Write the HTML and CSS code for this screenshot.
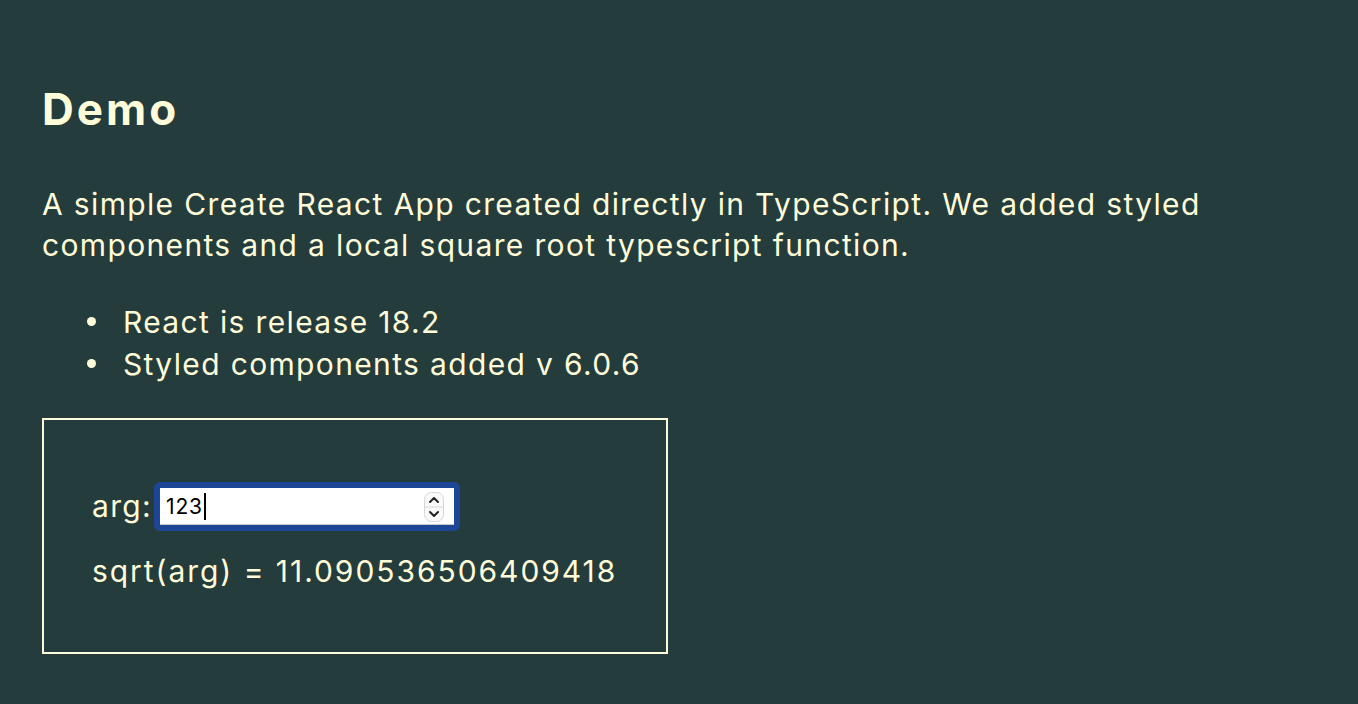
FILE: index.html
```html
<!DOCTYPE html>
<html lang="en">
<head>
<meta charset="utf-8">
<title>Demo</title>
<link rel="stylesheet" href="styles.css">
</head>
<body>
<main class="page">
  <h1 class="title">Demo</h1>
  <p class="intro">A simple Create React App created directly in TypeScript. We added styled components and a local square root typescript function.</p>
  <ul class="notes">
    <li class="note">React is release 18.2</li>
    <li class="note">Styled components added v 6.0.6</li>
  </ul>
  <section class="calc">
    <div class="arg-row">
      <label class="arg-label" for="arg">arg:</label>
      <div class="field" id="arg">
        <span class="field-value">123</span><span class="caret"></span>
        <span class="spinner">
          <svg width="20" height="30" viewBox="0 0 20 30">
            <rect x="0.5" y="0.5" width="19" height="29" rx="7" fill="#fafafa" stroke="#d6d6d6"/>
            <line x1="1" y1="15" x2="19" y2="15" stroke="#d6d6d6"/>
            <path d="M6 10 L10 6 L14 10" fill="none" stroke="#222" stroke-width="2" stroke-linecap="round" stroke-linejoin="round"/>
            <path d="M6 20 L10 24 L14 20" fill="none" stroke="#222" stroke-width="2" stroke-linecap="round" stroke-linejoin="round"/>
          </svg>
        </span>
      </div>
    </div>
    <div class="result">sqrt(arg) = 11.090536506409418</div>
  </section>
</main>
</body>
</html>
```
FILE: styles.css
```css
html, body {
  margin: 0;
  padding: 0;
  background: #253c3d;
  color: #fffcd9;
  font-family: Inter, "Noto Sans", "Liberation Sans", sans-serif;
}
.page {
  padding: 82px 42px 0 42px;
}
.title {
  margin: 0;
  font-size: 44px;
  line-height: 54px;
  font-weight: 700;
  letter-spacing: 3px;
}
.intro {
  margin: 48px 0 0 0;
  font-size: 30px;
  line-height: 41px;
  letter-spacing: 1.35px;
}
.notes {
  margin: 35px 0 0 0;
  padding: 0 0 0 45px;
  list-style: none;
  font-size: 30px;
  line-height: 42px;
  letter-spacing: 1.35px;
}
.note {
  display: flex;
  align-items: center;
}
.note::before {
  content: "";
  width: 9px;
  height: 9px;
  border-radius: 50%;
  background: #fffcd9;
  margin-right: 27px;
  flex: none;
  position: relative;
  top: -1px;
}
.calc {
  margin-top: 33px;
  width: 626px;
  box-sizing: border-box;
  border: 2px solid #fffcd9;
  padding: 62px 0 60px 48px;
  display: flex;
  flex-direction: column;
  gap: 20px;
}
.arg-row {
  display: flex;
  align-items: center;
  gap: 2px;
  height: 49px;
}
.arg-label {
  font-size: 30px;
  line-height: 41px;
  letter-spacing: 1.35px;
}
.field {
  box-sizing: border-box;
  width: 306px;
  height: 49px;
  background: #fff;
  border: 6px solid #1d4696;
  border-radius: 6px;
  display: flex;
  align-items: center;
  padding: 0 10px 0 6px;
  color: #000;
  font-size: 21px;
  letter-spacing: 0.8px;
  box-shadow: inset 0 -1px 0 #c8c8c8;
}
.field-value {
  line-height: 27px;
}
.caret {
  display: inline-block;
  width: 2px;
  height: 27px;
  background: #000;
  margin-left: 1px;
}
.spinner {
  margin-left: auto;
  display: flex;
}
.result {
  font-size: 30px;
  line-height: 41px;
  letter-spacing: 1.95px;
}
```
